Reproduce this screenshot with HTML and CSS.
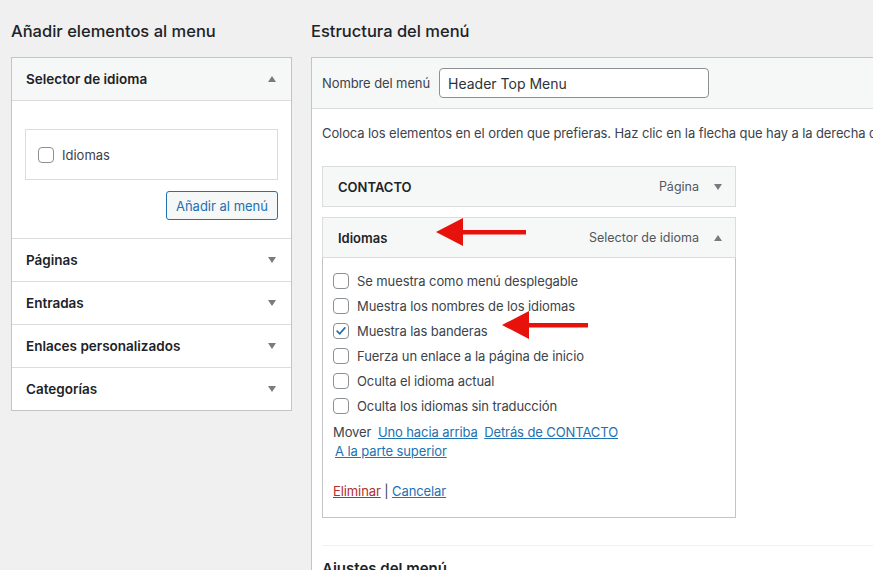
FILE: index.html
```html
<!DOCTYPE html>
<html lang="es">
<head>
<meta charset="utf-8">
<title>Menús</title>
<link rel="stylesheet" href="styles.css">
</head>
<body>
<div class="page">
  <div class="col-left">
    <h2 class="col-title">Añadir elementos al menu</h2>
    <div class="accordion">
      <div class="acc-head acc-open">
        <span>Selector de idioma</span>
        <span class="tri up"></span>
      </div>
      <div class="acc-body">
        <div class="list-box">
          <label class="check-row"><span class="cb"></span><span>Idiomas</span></label>
        </div>
        <div class="btn-row"><button class="btn">Añadir al menú</button></div>
      </div>
      <div class="acc-row"><span>Páginas</span><span class="tri"></span></div>
      <div class="acc-row"><span>Entradas</span><span class="tri"></span></div>
      <div class="acc-row"><span>Enlaces personalizados</span><span class="tri"></span></div>
      <div class="acc-row last"><span>Categorías</span><span class="tri"></span></div>
    </div>
  </div>

  <div class="col-right">
    <h2 class="col-title">Estructura del menú</h2>
    <div class="menu-panel">
      <div class="menu-head">
        <span class="name-label">Nombre del menú</span>
        <input class="name-input" type="text" value="Header Top Menu">
      </div>
      <div class="menu-body">
        <p class="intro">Coloca los elementos en el orden que prefieras. Haz clic en la flecha que hay a la derecha del elemento para mostrar más opciones de configuración.</p>
        <div class="item">
          <div class="item-head">
            <span class="item-title">CONTACTO</span>
            <span class="item-type">Página</span>
            <span class="tri"></span>
          </div>
        </div>
        <div class="item open">
          <div class="item-head">
            <span class="item-title">Idiomas</span>
            <span class="item-type">Selector de idioma</span>
            <span class="tri up"></span>
          </div>
          <div class="item-settings">
            <label class="opt"><span class="cb"></span><span>Se muestra como menú desplegable</span></label>
            <label class="opt"><span class="cb"></span><span>Muestra los nombres de los idiomas</span></label>
            <label class="opt"><span class="cb checked"><svg viewBox="0 0 16 16" width="14" height="14"><path d="M3.6 8.2 L6.6 11.2 L12.4 4.4" fill="none" stroke="#2271b1" stroke-width="2" stroke-linecap="round" stroke-linejoin="round"/></svg></span><span>Muestra las banderas</span></label>
            <label class="opt"><span class="cb"></span><span>Fuerza un enlace a la página de inicio</span></label>
            <label class="opt"><span class="cb"></span><span>Oculta el idioma actual</span></label>
            <label class="opt"><span class="cb"></span><span>Oculta los idiomas sin traducción</span></label>
            <div class="move">
              <span>Mover</span>
              <a href="#" class="link">Uno hacia arriba</a>
              <a href="#" class="link">Detrás de CONTACTO</a>
              <br>
              <a href="#" class="link top">A la parte superior</a>
            </div>
            <div class="actions">
              <a href="#" class="del">Eliminar</a> | <a href="#" class="link">Cancelar</a>
            </div>
          </div>
        </div>
        <div class="sep"></div>
        <h3 class="settings-title">Ajustes del menú</h3>
      </div>
    </div>
  </div>
</div>

<svg class="arrow arrow-1" width="92" height="30" viewBox="0 0 92 30"><path d="M0 15 L27 1 L27 13 L90 13 L90 17.5 L27 17.5 L27 29 Z" fill="#e8120c"/></svg>
<svg class="arrow arrow-2" width="88" height="30" viewBox="0 0 88 30"><path d="M0 15 L27 1 L27 13 L86 13 L86 17.5 L27 17.5 L27 29 Z" fill="#e8120c"/></svg>
</body>
</html>
```
FILE: styles.css
```css
html, body {
  margin: 0;
  padding: 0;
}
body {
  background: #f0f0f1;
  font-family: Inter, "Liberation Sans", sans-serif;
  color: #3c434a;
  width: 873px;
  height: 570px;
  overflow: hidden;
  position: relative;
}
.page {
  display: flex;
  gap: 19px;
  padding-left: 11px;
  width: 1300px;
}
.col-left {
  width: 281px;
  flex: none;
}
.col-right {
  width: 700px;
  flex: none;
}
.col-title {
  font-size: 16.5px;
  font-weight: 500;
  line-height: 22px;
  color: #1d2327;
  margin: 20px 0 15px;
}
.accordion {
  background: #fff;
  border: 1px solid #c3c4c7;
}
.acc-head, .acc-row {
  display: flex;
  align-items: center;
  justify-content: space-between;
  height: 42px;
  padding: 0 15px 0 14px;
  font-size: 13.5px;
  font-weight: 600;
  color: #1d2327;
  border-bottom: 1px solid #dcdcde;
}
.acc-head {
  background: #f6f7f7;
}
.acc-row.last {
  border-bottom: none;
}
.tri {
  width: 0;
  height: 0;
  border-left: 4.5px solid transparent;
  border-right: 4.5px solid transparent;
  border-top: 6px solid #787c82;
}
.tri.up {
  border-top: none;
  border-bottom: 6px solid #787c82;
}
.acc-body {
  padding: 28px 13px 18px;
  border-bottom: 1px solid #dcdcde;
}
.list-box {
  border: 1px solid #dcdcde;
  height: 49px;
  display: flex;
  align-items: center;
  padding-left: 12px;
}
.check-row {
  display: flex;
  align-items: center;
  gap: 8px;
  font-size: 13px;
}
.cb {
  width: 14px;
  height: 14px;
  border: 1px solid #8c8f94;
  border-radius: 4px;
  background: #fff;
  display: inline-flex;
  align-items: center;
  justify-content: center;
  flex: none;
}
.btn-row {
  display: flex;
  justify-content: flex-end;
  margin-top: 11px;
}
.btn {
  font-family: inherit;
  font-size: 13px;
  color: #2271b1;
  background: #f6f7f7;
  border: 1px solid #2271b1;
  border-radius: 3px;
  height: 29px;
  padding: 0 9px;
  cursor: pointer;
}
.menu-panel {
  background: #fff;
  border: 1px solid #c3c4c7;
  border-right: none;
}
.menu-head {
  background: #f6f7f7;
  border-bottom: 1px solid #dcdcde;
  height: 50px;
  display: flex;
  align-items: center;
  padding-left: 10px;
  gap: 9px;
}
.name-label {
  font-size: 13px;
  color: #3c434a;
  letter-spacing: -0.1px;
}
.name-input {
  font-family: inherit;
  font-size: 14px;
  color: #2c3338;
  width: 270px;
  height: 30px;
  box-sizing: border-box;
  border: 1px solid #8c8f94;
  border-radius: 4px;
  padding: 0 8px;
  background: #fff;
}
.menu-body {
  padding: 0 0 0 10px;
}
.intro {
  font-size: 13px;
  line-height: 20px;
  margin: 14px 0 23px;
  white-space: nowrap;
  letter-spacing: -0.1px;
}
.item {
  width: 414px;
  margin-bottom: 10px;
}
.item-head {
  display: flex;
  align-items: center;
  height: 39px;
  background: #f6f7f7;
  border: 1px solid #dcdcde;
  padding: 0 13px 0 15px;
  font-size: 13px;
}
.item-title {
  font-weight: 600;
  color: #1d2327;
  flex: 1;
}
.item-type {
  color: #50575e;
  font-size: 12.5px;
  margin-right: 15px;
}
.item-settings {
  border: 1px solid #c3c4c7;
  border-top: none;
  padding: 10px 10px 16px;
  font-size: 13px;
  letter-spacing: -0.1px;
}
.opt {
  display: flex;
  align-items: center;
  gap: 8px;
  height: 25px;
}
.move {
  margin-top: 5px;
  line-height: 19px;
}
.move .link {
  margin-left: 3px;
}
.move .link.top {
  margin-left: 2px;
}
.link {
  color: #2271b1;
  text-decoration: underline;
}
.del {
  color: #b32d2e;
  text-decoration: underline;
}
.actions {
  margin-top: 20px;
  line-height: 20px;
}
.sep {
  border-top: 1px solid #f0f0f1;
  margin-top: 27px;
}
.settings-title {
  font-size: 15px;
  font-weight: 600;
  color: #1d2327;
  margin: 13px 0 0;
}
.arrow {
  position: absolute;
}
.arrow-1 {
  left: 436px;
  top: 217px;
}
.arrow-2 {
  left: 502px;
  top: 310px;
}
```
